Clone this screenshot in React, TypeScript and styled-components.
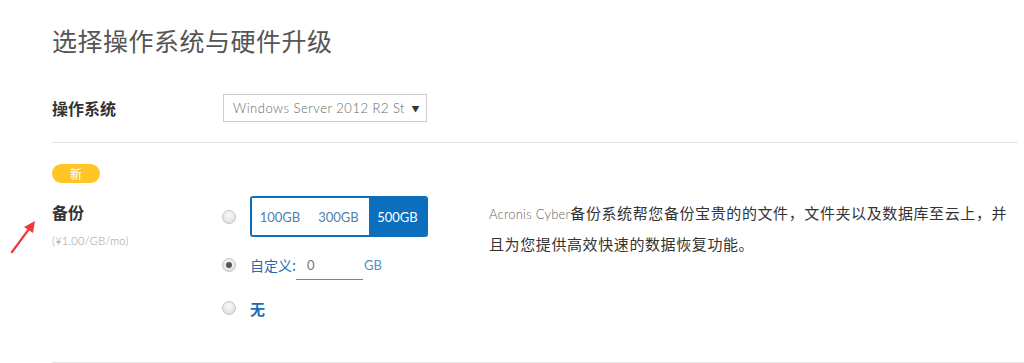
import React from 'react';
import styled, { createGlobalStyle } from 'styled-components';

const COLOR_BLUE = '#0b6fbd';
const COLOR_LINK = '#1d6db5';
const COLOR_LINE = '#e3e3e3';
const LATIN = '"Lato", "Noto Sans CJK SC", sans-serif';

const GlobalStyle = createGlobalStyle`
  body {
    margin: 0;
    background: #fff;
    font-family: "Noto Sans CJK SC", "Noto Sans", sans-serif;
  }
`;

const Page = styled.div`
  position: relative;
  padding-left: 52px;
  width: 1024px;
  height: 363px;
  box-sizing: border-box;
  overflow: hidden;
`;

const Title = styled.h1`
  margin: 0;
  padding-top: 24px;
  font-size: 25px;
  line-height: 32px;
  font-weight: 400;
  letter-spacing: 0.5px;
  color: #555;
`;

const OsRow = styled.div`
  display: flex;
  align-items: center;
  margin-top: 38px;
  margin-right: 6px;
  padding-bottom: 20px;
  border-bottom: 1px solid ${COLOR_LINE};
`;

const Label = styled.div`
  width: 171px;
  font-size: 16px;
  line-height: 20px;
  font-weight: 700;
  color: #333;
`;

const Select = styled.div`
  display: flex;
  align-items: center;
  width: 204px;
  height: 28px;
  box-sizing: border-box;
  border: 1px solid #ccc;
  padding: 0 6px 0 9px;
  font-family: ${LATIN};
  font-size: 13px;
  font-weight: 300;
  letter-spacing: 0.5px;
  color: #666;
`;

const SelectText = styled.span`
  flex: 1;
  min-width: 0;
  overflow: hidden;
  white-space: nowrap;
`;

const SelectArrow = styled.span`
  font-size: 8px;
  color: #333;
  margin-left: 8px;
`;

const Section = styled.div`
  padding-top: 21px;
  padding-bottom: 44px;
  border-bottom: 1px solid ${COLOR_LINE};
`;

const Badge = styled.div`
  display: flex;
  align-items: center;
  justify-content: center;
  width: 48px;
  height: 19px;
  border-radius: 10px;
  background: #ffc524;
  color: #fff;
  font-size: 12px;
`;

const BackupRow = styled.div`
  display: flex;
  margin-top: 13px;
`;

const LabelCol = styled.div`
  width: 170px;
  padding-top: 6px;
`;

const Price = styled.div`
  margin-top: 12px;
  font-family: ${LATIN};
  font-size: 11px;
  font-weight: 300;
  letter-spacing: 0.3px;
  color: #999;
`;

const Options = styled.div`
  display: flex;
  flex-direction: column;
  width: 267px;
`;

const Option = styled.div<{ $h: number; $mt?: number }>`
  display: flex;
  align-items: center;
  height: ${p => p.$h}px;
  margin-top: ${p => p.$mt ?? 0}px;
`;

const Radio = styled.span<{ $checked?: boolean }>`
  position: relative;
  width: 12px;
  height: 12px;
  border-radius: 50%;
  border: 1px solid #c4c4c4;
  background: radial-gradient(circle at 50% 35%, #fafafa, #d8d8d8);
  margin-right: 14px;
  flex-shrink: 0;
  &::after {
    content: '';
    display: ${p => (p.$checked ? 'block' : 'none')};
    position: absolute;
    left: 3px;
    top: 3px;
    width: 6px;
    height: 6px;
    border-radius: 50%;
    background: #555;
  }
`;

const Segmented = styled.div`
  display: flex;
  height: 41px;
  box-sizing: border-box;
  border: 2px solid ${COLOR_BLUE};
  border-radius: 3px;
  overflow: hidden;
`;

const Segment = styled.div<{ $active?: boolean; $w: number }>`
  display: flex;
  align-items: center;
  justify-content: center;
  width: ${p => p.$w}px;
  font-family: ${LATIN};
  font-size: 13px;
  background: ${p => (p.$active ? COLOR_BLUE : '#fff')};
  color: ${p => (p.$active ? '#fff' : '#4f7fb6')};
`;

const CustomLabel = styled.span`
  font-size: 14px;
  color: ${COLOR_LINK};
`;

const CustomInput = styled.div`
  width: 56px;
  height: 28px;
  padding-left: 11px;
  display: flex;
  align-items: center;
  border-bottom: 1px solid #4a90d0;
  font-family: ${LATIN};
  font-size: 13px;
  color: #777;
`;

const Unit = styled.span`
  margin-left: 1px;
  font-family: ${LATIN};
  font-size: 13px;
  color: #4a8fd0;
`;

const NoneLabel = styled.span`
  font-size: 15px;
  font-weight: 700;
  color: ${COLOR_LINK};
`;

const Description = styled.p`
  width: 528px;
  margin: 2px 0 0;
  font-size: 15px;
  line-height: 29px;
  letter-spacing: 0.6px;
  color: #333;
`;

const Brand = styled.span`
  font-family: ${LATIN};
  font-size: 13px;
  font-weight: 300;
  letter-spacing: 0.2px;
  color: #666;
`;

const Arrow = styled.svg`
  position: absolute;
  left: 8px;
  top: 218px;
`;

const App = () => {
  return (
    <Page>
      <GlobalStyle />
      <Title>选择操作系统与硬件升级</Title>
      <OsRow>
        <Label>操作系统</Label>
        <Select>
          <SelectText>Windows Server 2012 R2 Standard</SelectText>
          <SelectArrow>▼</SelectArrow>
        </Select>
      </OsRow>
      <Section>
        <Badge>新</Badge>
        <BackupRow>
          <LabelCol>
            <Label>备份</Label>
            <Price>(¥1.00/GB/mo)</Price>
          </LabelCol>
          <Options>
            <Option $h={41}>
              <Radio />
              <Segmented>
                <Segment $w={56}>100GB</Segment>
                <Segment $w={61}>300GB</Segment>
                <Segment $w={57} $active>500GB</Segment>
              </Segmented>
            </Option>
            <Option $h={28} $mt={14}>
              <Radio $checked />
              <CustomLabel>自定义:</CustomLabel>
              <CustomInput>0</CustomInput>
              <Unit>GB</Unit>
            </Option>
            <Option $h={20} $mt={19}>
              <Radio />
              <NoneLabel>无</NoneLabel>
            </Option>
          </Options>
          <Description>
            <Brand>Acronis Cyber</Brand>
            备份系统帮您备份宝贵的的文件，文件夹以及数据库至云上，并且为您提供高效快速的数据恢复功能。
          </Description>
        </BackupRow>
      </Section>
      <Arrow width="34" height="40" viewBox="0 0 34 40">
        <line x1="4" y1="34" x2="21" y2="11" stroke="#f03a3a" strokeWidth="2.2" strokeLinecap="round" />
        <polygon points="27,3 25,15 16,9" fill="#f03a3a" />
      </Arrow>
    </Page>
  );
};

export default App;
